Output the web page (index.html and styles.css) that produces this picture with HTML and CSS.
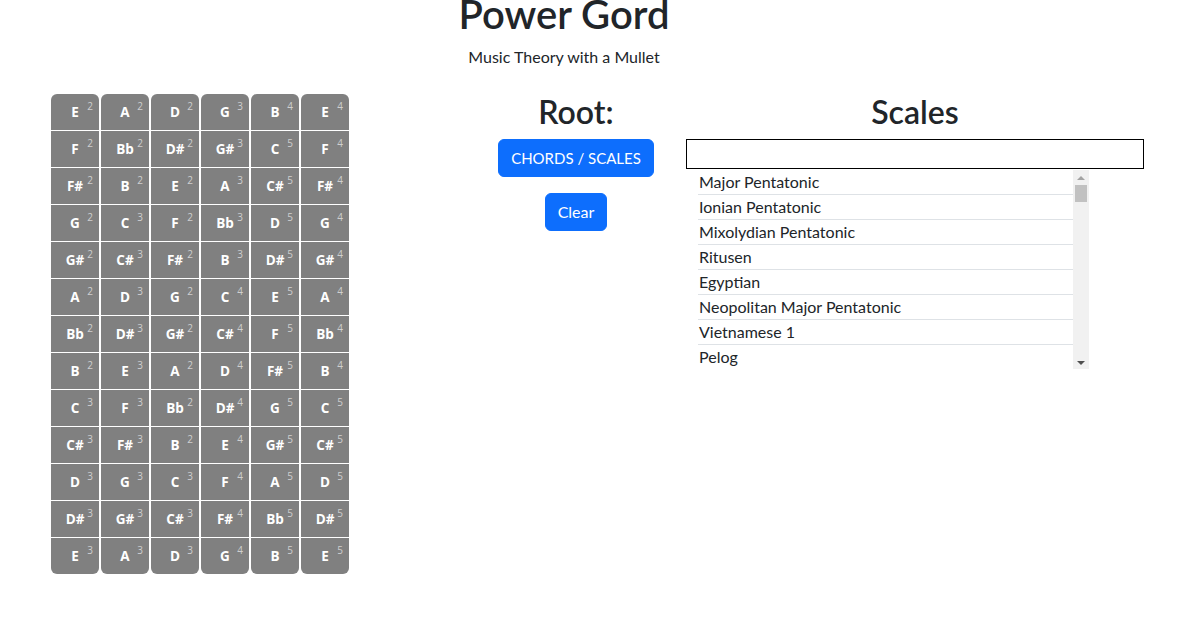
FILE: index.html
```html
<!DOCTYPE html>
<html lang="en">
<head>
<meta charset="utf-8">
<title>Power Gord</title>
<link rel="stylesheet" href="styles.css">
</head>
<body>
<header class="header">
  <h1 class="title">Power Gord</h1>
  <p class="subtitle">Music Theory with a Mullet</p>
</header>
<main class="main">
  <div class="fretboard">
    <div class="string">
      <div class="fret"><span class="note">E</span><sup class="oct">2</sup></div>
      <div class="fret"><span class="note">F</span><sup class="oct">2</sup></div>
      <div class="fret"><span class="note">F#</span><sup class="oct">2</sup></div>
      <div class="fret"><span class="note">G</span><sup class="oct">2</sup></div>
      <div class="fret"><span class="note">G#</span><sup class="oct">2</sup></div>
      <div class="fret"><span class="note">A</span><sup class="oct">2</sup></div>
      <div class="fret"><span class="note">Bb</span><sup class="oct">2</sup></div>
      <div class="fret"><span class="note">B</span><sup class="oct">2</sup></div>
      <div class="fret"><span class="note">C</span><sup class="oct">3</sup></div>
      <div class="fret"><span class="note">C#</span><sup class="oct">3</sup></div>
      <div class="fret"><span class="note">D</span><sup class="oct">3</sup></div>
      <div class="fret"><span class="note">D#</span><sup class="oct">3</sup></div>
      <div class="fret"><span class="note">E</span><sup class="oct">3</sup></div>
    </div>
    <div class="string">
      <div class="fret"><span class="note">A</span><sup class="oct">2</sup></div>
      <div class="fret"><span class="note">Bb</span><sup class="oct">2</sup></div>
      <div class="fret"><span class="note">B</span><sup class="oct">2</sup></div>
      <div class="fret"><span class="note">C</span><sup class="oct">3</sup></div>
      <div class="fret"><span class="note">C#</span><sup class="oct">3</sup></div>
      <div class="fret"><span class="note">D</span><sup class="oct">3</sup></div>
      <div class="fret"><span class="note">D#</span><sup class="oct">3</sup></div>
      <div class="fret"><span class="note">E</span><sup class="oct">3</sup></div>
      <div class="fret"><span class="note">F</span><sup class="oct">3</sup></div>
      <div class="fret"><span class="note">F#</span><sup class="oct">3</sup></div>
      <div class="fret"><span class="note">G</span><sup class="oct">3</sup></div>
      <div class="fret"><span class="note">G#</span><sup class="oct">3</sup></div>
      <div class="fret"><span class="note">A</span><sup class="oct">3</sup></div>
    </div>
    <div class="string">
      <div class="fret"><span class="note">D</span><sup class="oct">2</sup></div>
      <div class="fret"><span class="note">D#</span><sup class="oct">2</sup></div>
      <div class="fret"><span class="note">E</span><sup class="oct">2</sup></div>
      <div class="fret"><span class="note">F</span><sup class="oct">2</sup></div>
      <div class="fret"><span class="note">F#</span><sup class="oct">2</sup></div>
      <div class="fret"><span class="note">G</span><sup class="oct">2</sup></div>
      <div class="fret"><span class="note">G#</span><sup class="oct">2</sup></div>
      <div class="fret"><span class="note">A</span><sup class="oct">2</sup></div>
      <div class="fret"><span class="note">Bb</span><sup class="oct">2</sup></div>
      <div class="fret"><span class="note">B</span><sup class="oct">2</sup></div>
      <div class="fret"><span class="note">C</span><sup class="oct">3</sup></div>
      <div class="fret"><span class="note">C#</span><sup class="oct">3</sup></div>
      <div class="fret"><span class="note">D</span><sup class="oct">3</sup></div>
    </div>
    <div class="string">
      <div class="fret"><span class="note">G</span><sup class="oct">3</sup></div>
      <div class="fret"><span class="note">G#</span><sup class="oct">3</sup></div>
      <div class="fret"><span class="note">A</span><sup class="oct">3</sup></div>
      <div class="fret"><span class="note">Bb</span><sup class="oct">3</sup></div>
      <div class="fret"><span class="note">B</span><sup class="oct">3</sup></div>
      <div class="fret"><span class="note">C</span><sup class="oct">4</sup></div>
      <div class="fret"><span class="note">C#</span><sup class="oct">4</sup></div>
      <div class="fret"><span class="note">D</span><sup class="oct">4</sup></div>
      <div class="fret"><span class="note">D#</span><sup class="oct">4</sup></div>
      <div class="fret"><span class="note">E</span><sup class="oct">4</sup></div>
      <div class="fret"><span class="note">F</span><sup class="oct">4</sup></div>
      <div class="fret"><span class="note">F#</span><sup class="oct">4</sup></div>
      <div class="fret"><span class="note">G</span><sup class="oct">4</sup></div>
    </div>
    <div class="string">
      <div class="fret"><span class="note">B</span><sup class="oct">4</sup></div>
      <div class="fret"><span class="note">C</span><sup class="oct">5</sup></div>
      <div class="fret"><span class="note">C#</span><sup class="oct">5</sup></div>
      <div class="fret"><span class="note">D</span><sup class="oct">5</sup></div>
      <div class="fret"><span class="note">D#</span><sup class="oct">5</sup></div>
      <div class="fret"><span class="note">E</span><sup class="oct">5</sup></div>
      <div class="fret"><span class="note">F</span><sup class="oct">5</sup></div>
      <div class="fret"><span class="note">F#</span><sup class="oct">5</sup></div>
      <div class="fret"><span class="note">G</span><sup class="oct">5</sup></div>
      <div class="fret"><span class="note">G#</span><sup class="oct">5</sup></div>
      <div class="fret"><span class="note">A</span><sup class="oct">5</sup></div>
      <div class="fret"><span class="note">Bb</span><sup class="oct">5</sup></div>
      <div class="fret"><span class="note">B</span><sup class="oct">5</sup></div>
    </div>
    <div class="string">
      <div class="fret"><span class="note">E</span><sup class="oct">4</sup></div>
      <div class="fret"><span class="note">F</span><sup class="oct">4</sup></div>
      <div class="fret"><span class="note">F#</span><sup class="oct">4</sup></div>
      <div class="fret"><span class="note">G</span><sup class="oct">4</sup></div>
      <div class="fret"><span class="note">G#</span><sup class="oct">4</sup></div>
      <div class="fret"><span class="note">A</span><sup class="oct">4</sup></div>
      <div class="fret"><span class="note">Bb</span><sup class="oct">4</sup></div>
      <div class="fret"><span class="note">B</span><sup class="oct">4</sup></div>
      <div class="fret"><span class="note">C</span><sup class="oct">5</sup></div>
      <div class="fret"><span class="note">C#</span><sup class="oct">5</sup></div>
      <div class="fret"><span class="note">D</span><sup class="oct">5</sup></div>
      <div class="fret"><span class="note">D#</span><sup class="oct">5</sup></div>
      <div class="fret"><span class="note">E</span><sup class="oct">5</sup></div>
    </div>
  </div>

  <section class="root-col">
    <h2 class="heading">Root:</h2>
    <button class="btn btn-wide" type="button">CHORDS / SCALES</button>
    <button class="btn" type="button">Clear</button>
  </section>

  <section class="scales-col">
    <h2 class="heading">Scales</h2>
    <input class="search" type="text">
    <div class="list-wrap">
      <ul class="scale-list">
        <li class="scale">Major Pentatonic</li>
        <li class="scale">Ionian Pentatonic</li>
        <li class="scale">Mixolydian Pentatonic</li>
        <li class="scale">Ritusen</li>
        <li class="scale">Egyptian</li>
        <li class="scale">Neopolitan Major Pentatonic</li>
        <li class="scale">Vietnamese 1</li>
        <li class="scale">Pelog</li>
      </ul>
      <div class="scrollbar" aria-hidden="true">
        <span class="sb-btn"><span class="arrow-up"></span></span>
        <span class="sb-thumb"></span>
        <span class="sb-track"></span>
        <span class="sb-btn"><span class="arrow-down"></span></span>
      </div>
    </div>
  </section>
</main>
</body>
</html>
```

FILE: styles.css
```css
* { box-sizing: border-box; }

html, body {
  margin: 0;
  padding: 0;
  background: #fff;
}

body {
  font-family: Lato, "Open Sans", sans-serif;
  font-size: 16px;
  line-height: 1.5;
  color: #212529;
  overflow: hidden;
}

.header {
  padding-right: 76px;
  text-align: center;
}

.title {
  margin: -10px 0 0;
  font-size: 40px;
  line-height: 48px;
  font-weight: 600;
}

.subtitle {
  margin: 7px 0 0;
  font-size: 16px;
  line-height: 24px;
}

.main {
  display: flex;
  align-items: flex-start;
  padding-left: 51px;
  margin-top: 25px;
}

.fretboard {
  display: flex;
  gap: 2px;
}

.string {
  display: flex;
  flex-direction: column;
  gap: 1px;
  width: 48px;
  border-radius: 6px;
  overflow: hidden;
}

.fret {
  position: relative;
  height: 36px;
  background: #808080;
  display: flex;
  align-items: center;
  justify-content: center;
}

.note {
  color: #fff;
  font-family: "Open Sans", sans-serif;
  font-weight: 700;
  font-size: 13.5px;
  line-height: 1;
  margin-top: 2px;
}

.oct {
  position: absolute;
  right: 6px;
  top: 7px;
  font-family: "Open Sans", sans-serif;
  font-size: 10px;
  font-weight: 400;
  color: #cfcfcf;
  line-height: 1;
}

.heading {
  margin: -1px 0 8px;
  font-size: 32px;
  line-height: 38px;
  font-weight: 600;
  text-align: center;
}

.root-col {
  width: 220px;
  margin-left: 117px;
  display: flex;
  flex-direction: column;
  align-items: center;
}

.btn {
  font-family: inherit;
  font-size: 16px;
  line-height: 24px;
  padding: 6px 12px;
  color: #fff;
  background: #0d6efd;
  border: 1px solid #0d6efd;
  border-radius: 6px;
  margin-bottom: 16px;
}

.btn-wide {
  font-size: 15px;
}

.scales-col {
  width: 458px;
  display: flex;
  flex-direction: column;
}

.search {
  height: 30px;
  width: 458px;
  border: 1px solid #000;
  font-family: inherit;
  font-size: 16px;
  margin: 0;
}

.list-wrap {
  display: flex;
  margin: 1px 0 0 12px;
  width: 391px;
  height: 199px;
}

.scale-list {
  flex: 1;
  list-style: none;
  margin: 0;
  padding: 0;
  overflow: hidden;
}

.scale {
  height: 25px;
  line-height: 24px;
  border-bottom: 1px solid #dee2e6;
  padding-left: 1px;
}

.scrollbar {
  width: 16px;
  background: #f1f1f1;
  display: flex;
  flex-direction: column;
}

.sb-btn {
  height: 15px;
  display: flex;
  align-items: center;
  justify-content: center;
}

.sb-thumb {
  height: 17px;
  margin: 0 2px;
  background: #c1c1c1;
}

.sb-track {
  flex: 1;
}

.arrow-up {
  width: 0;
  height: 0;
  border-left: 4px solid transparent;
  border-right: 4px solid transparent;
  border-bottom: 4px solid #a3a3a3;
  margin-top: 1px;
}

.arrow-down {
  width: 0;
  height: 0;
  border-left: 4px solid transparent;
  border-right: 4px solid transparent;
  border-top: 4px solid #505050;
  margin-top: 2px;
}
```
